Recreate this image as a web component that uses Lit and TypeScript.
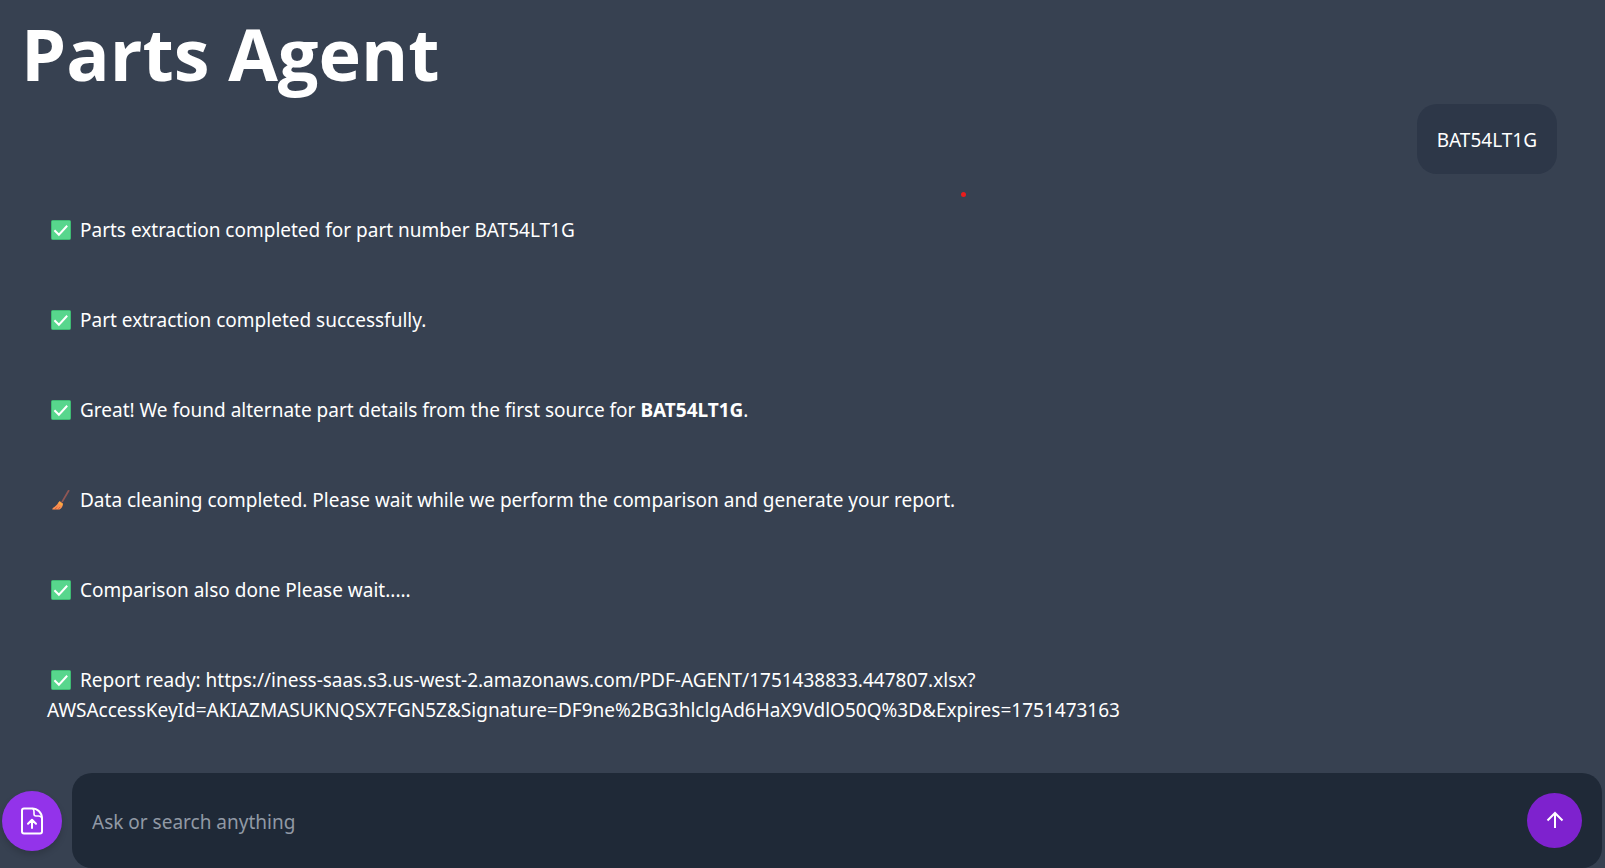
import { LitElement, html, css, svg, nothing } from "lit";
import { customElement, state } from "lit/decorators.js";

type Icon = "check" | "broom";

interface AgentMessage {
  icon: Icon;
  text: string;
  part?: string;
  tail?: string;
}

const MESSAGES: AgentMessage[] = [
  { icon: "check", text: "Parts extraction completed for part number BAT54LT1G" },
  { icon: "check", text: "Part extraction completed successfully." },
  {
    icon: "check",
    text: "Great! We found alternate part details from the first source for ",
    part: "BAT54LT1G",
    tail: ".",
  },
  {
    icon: "broom",
    text: "Data cleaning completed. Please wait while we perform the comparison and generate your report.",
  },
  { icon: "check", text: "Comparison also done Please wait....." },
  {
    icon: "check",
    text: "Report ready: https://iness-saas.s3.us-west-2.amazonaws.com/PDF-AGENT/1751438833.447807.xlsx?AWSAccessKeyId=AKIAZMASUKNQSX7FGN5Z&Signature=DF9ne%2BG3hlclgAd6HaX9VdlO50Q%3D&Expires=1751473163",
  },
];

const check = svg`
  <rect x="0.5" y="0.5" width="19" height="19" rx="1" fill="#58d68d" stroke="#3fbb74" />
  <path d="M3.4 10.2 L7.9 14.7 L16.2 5.8" fill="none" stroke="#fff" stroke-width="2" />`;

const broom = svg`
  <path d="M17.6 0.8 L11.4 11.4" fill="none" stroke="#8f5654" stroke-width="1.8" stroke-linecap="round" />
  <path d="M8.6 11 L12 13.4 C12 16.2 10.4 18.2 8.6 19.6 L1.2 19.4 C1.4 18.4 2.2 17.6 3.4 17 C5.4 15.6 6.8 13.6 8.6 11 Z" fill="#f98f50" />
  <path d="M7.8 12.4 L11.2 15.2" stroke="#f9b03c" stroke-width="1.6" />
  <path d="M3.8 19.2 L6.4 17 M7 19.4 L9 17" stroke="#d3543a" stroke-width="0.8" />`;

@customElement("app-root")
export class AppRoot extends LitElement {
  @state() private query = "";

  static styles = css`
    :host {
      display: flex;
      flex-direction: column;
      box-sizing: border-box;
      min-height: 100vh;
      position: relative;
      background: #374151;
      color: #fff;
      font-family: "Noto Sans", "Open Sans", sans-serif;
      font-size: 19px;
      line-height: 30px;
    }
    * {
      box-sizing: border-box;
    }
    .title {
      margin: 0;
      padding: 13px 21px 1px;
      font-family: "Open Sans", "Noto Sans", sans-serif;
      font-size: 72px;
      line-height: 80px;
      font-weight: 700;
    }
    .thread {
      flex: 1;
      display: flex;
      flex-direction: column;
      align-items: flex-start;
      gap: 20px;
      margin: 0;
      padding: 10px 48px 20px 27px;
      list-style: none;
    }
    .message {
      max-width: 80%;
      padding: 21px 20px 19px;
      overflow-wrap: break-word;
    }
    .user {
      align-self: flex-end;
      border-radius: 20px;
      background: #2d3748;
    }
    .emoji {
      width: 20px;
      height: 20px;
      margin: 0 9px 0 4px;
      vertical-align: -3px;
    }
    .pointer {
      position: absolute;
      left: calc(60% - 2px);
      top: 192px;
      width: 5px;
      height: 5px;
      border-radius: 50%;
      background: #e91c1c;
    }
    .bar {
      display: flex;
      align-items: center;
      gap: 10px;
      padding: 0 3px 0 2px;
    }
    button {
      display: grid;
      place-items: center;
      flex: none;
      padding: 0;
      border: 0;
      border-radius: 50%;
      color: #fff;
      cursor: pointer;
    }
    .upload {
      width: 60px;
      height: 60px;
      background: #9333ea;
      box-shadow: 0 4px 6px rgba(0, 0, 0, 0.15);
    }
    .send {
      width: 55px;
      height: 55px;
      background: #7e22ce;
    }
    .composer {
      flex: 1;
      display: flex;
      align-items: center;
      gap: 20px;
      padding: 20px;
      border-radius: 20px;
      background: #1f2937;
    }
    .field {
      flex: 1;
      min-width: 0;
      padding: 2px 0 0;
      border: 0;
      outline: 0;
      background: none;
      color: #fff;
      font: inherit;
    }
    .field::placeholder {
      color: #9199a5;
      opacity: 1;
    }
  `;

  private onInput(e: Event) {
    this.query = (e.target as HTMLInputElement).value;
  }

  render() {
    return html`
      <h1 class="title">Parts Agent</h1>
      <ul class="thread">
        <li class="message user">BAT54LT1G</li>
        ${MESSAGES.map(
          (m) => html`<li class="message"><svg class="emoji" viewBox="0 0 20 20" aria-hidden="true">${m.icon === "check" ? check : broom}</svg>${m.text}${m.part ? html`<strong>${m.part}</strong>` : nothing}${m.tail ?? nothing}</li>`,
        )}
      </ul>
      <span class="pointer"></span>
      <form class="bar" @submit=${(e: Event) => e.preventDefault()}>
        <button class="upload" type="button" aria-label="Upload file">
          <svg width="28" height="30" viewBox="0 0 28 30" fill="none" stroke="currentColor" stroke-width="2" stroke-linecap="round" stroke-linejoin="round">
            <path d="M15 2.5 H6 Q4 2.5 4 4.5 V25.5 Q4 27.5 6 27.5 H22 Q24 27.5 24 25.5 V12.5 C24 6.5 19.5 2.5 14 2.5" />
            <path d="M15 2.8 Q16 3.6 16 6 V8 Q16 10 18 10 H20.5 Q23.6 10 24 12.5" stroke-width="1.6" />
            <path d="M14 22 V14 M10 17.8 L14 13.8 L18 17.8" />
          </svg>
        </button>
        <div class="composer">
          <input class="field" type="text" aria-label="Ask or search anything" placeholder="Ask or search anything" .value=${this.query} @input=${this.onInput} />
          <button class="send" type="submit" aria-label="Send">
            <svg width="20" height="20" viewBox="0 0 20 20" fill="none" stroke="currentColor" stroke-width="2">
              <path d="M10 17 V2 M2.5 9.5 L10 2 L17.5 9.5" />
            </svg>
          </button>
        </div>
      </form>
    `;
  }
}
